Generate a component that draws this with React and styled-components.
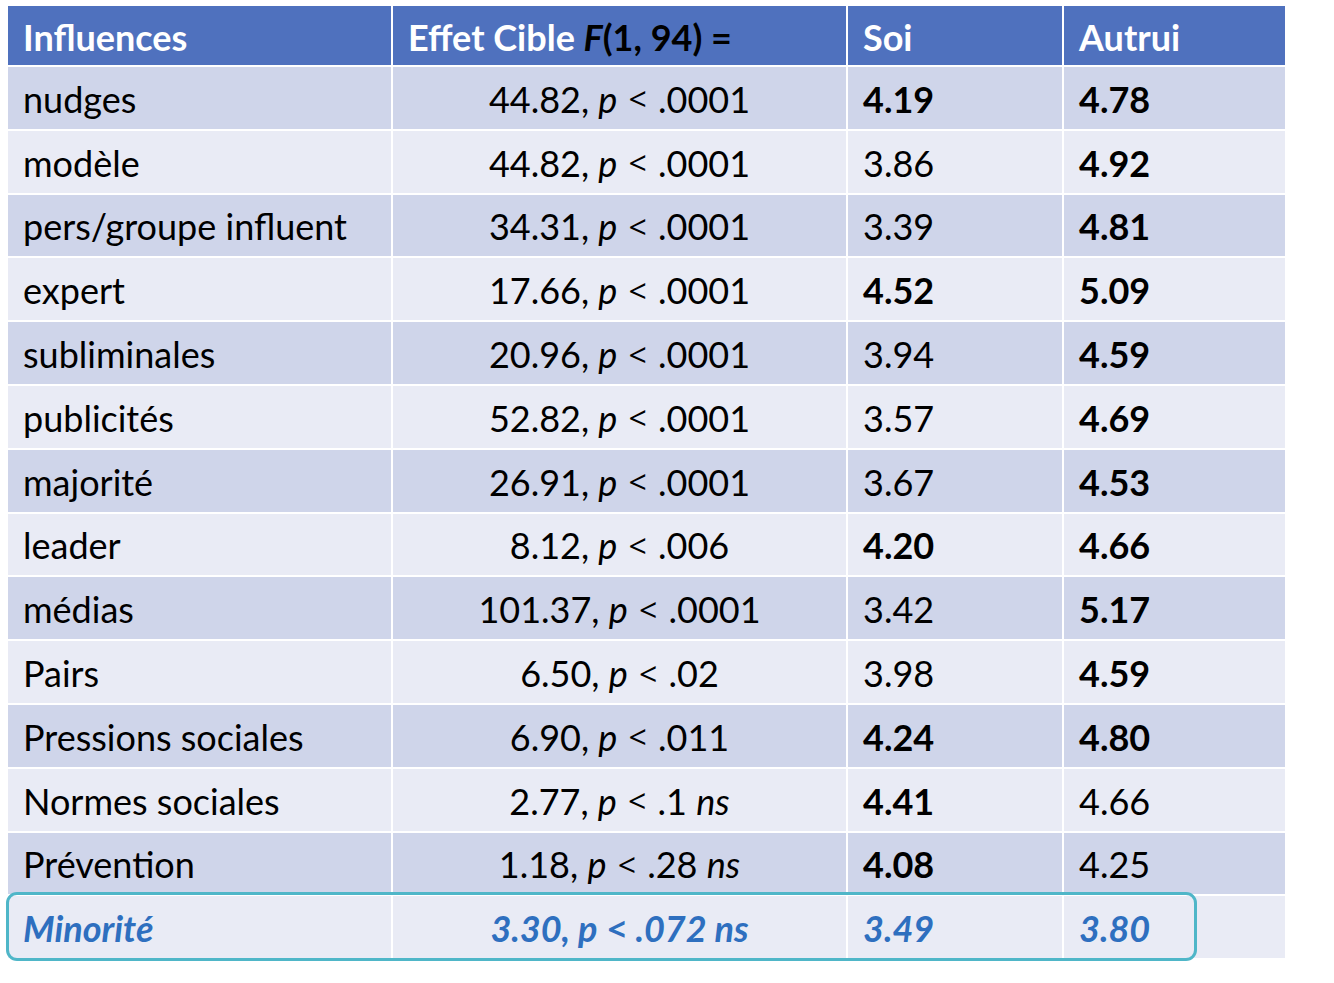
import React from "react";
import styled, { createGlobalStyle } from "styled-components";

const GlobalStyle = createGlobalStyle`
  html, body {
    margin: 0;
    padding: 0;
    background: #ffffff;
  }
`;

const Page = styled.div`
  padding: 6px 8px;
  font-family: Lato, "Open Sans", sans-serif;
  color: #000;
`;

const Table = styled.div`
  width: 1277px;
  display: flex;
  flex-direction: column;
  gap: 2px;
`;

const Row = styled.div`
  position: relative;
  display: grid;
  grid-template-columns: 383px 453px 214px 221px;
  gap: 2px;
  height: ${(p) => (p.$head ? "59px" : "61.8px")};

  ${(p) =>
    p.$outlined &&
    `
    &::after {
      content: "";
      position: absolute;
      left: -2px;
      top: -4px;
      width: 1191px;
      height: 69px;
      box-sizing: border-box;
      border: 3px solid #4fb6c8;
      border-radius: 11px;
      pointer-events: none;
    }
  `}
`;

const Cell = styled.div`
  display: flex;
  align-items: center;
  justify-content: ${(p) => (p.$center ? "center" : "flex-start")};
  padding-left: ${(p) => (p.$center ? "0" : "15px")};
  background: ${(p) =>
    p.$head ? "#4f71be" : p.$odd ? "#cfd5ea" : "#e9ebf5"};
  color: ${(p) => (p.$head ? "#ffffff" : p.$accent ? "#2e6fbf" : "#000")};
  font-size: 36px;
  font-weight: ${(p) => (p.$bold || p.$head || p.$accent ? 700 : 400)};
  font-style: ${(p) => (p.$accent ? "italic" : "normal")};
  white-space: nowrap;
  padding-top: 2px;
`;

const Dark = styled.span`
  color: #000;
`;

// Lato's "<" is tiny, borrow a wider one
const Lt = styled.span`
  font-family: "Open Sans", sans-serif;
  font-size: 32px;
  margin: 0 2px;
`;

const rows = [
  ["nudges", "44.82", ".0001", false, "4.19", true, "4.78", true],
  ["modèle", "44.82", ".0001", false, "3.86", false, "4.92", true],
  ["pers/groupe influent", "34.31", ".0001", false, "3.39", false, "4.81", true],
  ["expert", "17.66", ".0001", false, "4.52", true, "5.09", true],
  ["subliminales", "20.96", ".0001", false, "3.94", false, "4.59", true],
  ["publicités", "52.82", ".0001", false, "3.57", false, "4.69", true],
  ["majorité", "26.91", ".0001", false, "3.67", false, "4.53", true],
  ["leader", "8.12", ".006", false, "4.20", true, "4.66", true],
  ["médias", "101.37", ".0001", false, "3.42", false, "5.17", true],
  ["Pairs", "6.50", ".02", false, "3.98", false, "4.59", true],
  ["Pressions sociales", "6.90", ".011", false, "4.24", true, "4.80", true],
  ["Normes sociales", "2.77", ".1", true, "4.41", true, "4.66", false],
  ["Prévention", "1.18", ".28", true, "4.08", true, "4.25", false],
];

export default function App() {
  return (
    <Page>
      <GlobalStyle />
      <Table>
        <Row $head>
          <Cell $head>Influences</Cell>
          <Cell $head>
            Effet Cible&nbsp;
            <Dark>
              <i>F</i>(1, 94) =
            </Dark>
          </Cell>
          <Cell $head>Soi</Cell>
          <Cell $head>Autrui</Cell>
        </Row>
        {rows.map(([name, f, p, ns, soi, soiB, aut, autB], i) => (
          <Row key={name}>
            <Cell $odd={i % 2 === 0}>{name}</Cell>
            <Cell $odd={i % 2 === 0} $center>
              {f},&nbsp;<i>p</i>&nbsp;<Lt>&lt;</Lt>&nbsp;{p}
              {ns && (
                <>
                  &nbsp;<i>ns</i>
                </>
              )}
            </Cell>
            <Cell $odd={i % 2 === 0} $bold={soiB}>
              {soi}
            </Cell>
            <Cell $odd={i % 2 === 0} $bold={autB}>
              {aut}
            </Cell>
          </Row>
        ))}
        <Row $outlined>
          <Cell $accent>Minorité</Cell>
          <Cell $accent $center>
            3.30, p&nbsp;<Lt>&lt;</Lt>&nbsp;.072 ns
          </Cell>
          <Cell $accent>3.49</Cell>
          <Cell $accent>3.80</Cell>
        </Row>
      </Table>
    </Page>
  );
}
